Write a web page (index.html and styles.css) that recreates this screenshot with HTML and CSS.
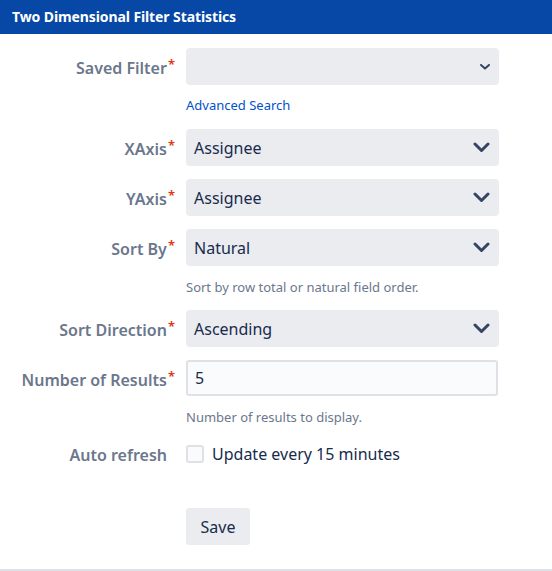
FILE: index.html
```html
<!DOCTYPE html>
<html>
<head>
<meta charset="utf-8">
<link rel="stylesheet" href="styles.css">
</head>
<body>
<div class="panel">
  <div class="header">Two Dimensional Filter Statistics</div>
  <form class="form">
    <div class="row">
      <label class="label">Saved Filter<span class="req">*</span></label>
      <div class="field">
        <div class="select">
          <span class="value"></span>
          <svg class="chev-small" width="10" height="6" viewBox="0 0 10 6"><path d="M1 1 L5 4.6 L9 1" fill="none" stroke="#344563" stroke-width="2" stroke-linecap="round" stroke-linejoin="round"/></svg>
        </div>
        <a class="link" href="#">Advanced Search</a>
      </div>
    </div>
    <div class="row">
      <label class="label">XAxis<span class="req">*</span></label>
      <div class="field">
        <div class="select">
          <span class="value">Assignee</span>
          <svg class="chev" width="17" height="11" viewBox="0 0 17 11"><path d="M2 2 L8.5 8.5 L15 2" fill="none" stroke="#344563" stroke-width="3" stroke-linecap="round" stroke-linejoin="round"/></svg>
        </div>
      </div>
    </div>
    <div class="row">
      <label class="label">YAxis<span class="req">*</span></label>
      <div class="field">
        <div class="select">
          <span class="value">Assignee</span>
          <svg class="chev" width="17" height="11" viewBox="0 0 17 11"><path d="M2 2 L8.5 8.5 L15 2" fill="none" stroke="#344563" stroke-width="3" stroke-linecap="round" stroke-linejoin="round"/></svg>
        </div>
      </div>
    </div>
    <div class="row">
      <label class="label">Sort By<span class="req">*</span></label>
      <div class="field">
        <div class="select">
          <span class="value">Natural</span>
          <svg class="chev" width="17" height="11" viewBox="0 0 17 11"><path d="M2 2 L8.5 8.5 L15 2" fill="none" stroke="#344563" stroke-width="3" stroke-linecap="round" stroke-linejoin="round"/></svg>
        </div>
        <div class="desc">Sort by row total or natural field order.</div>
      </div>
    </div>
    <div class="row">
      <label class="label">Sort Direction<span class="req">*</span></label>
      <div class="field">
        <div class="select">
          <span class="value">Ascending</span>
          <svg class="chev" width="17" height="11" viewBox="0 0 17 11"><path d="M2 2 L8.5 8.5 L15 2" fill="none" stroke="#344563" stroke-width="3" stroke-linecap="round" stroke-linejoin="round"/></svg>
        </div>
      </div>
    </div>
    <div class="row">
      <label class="label">Number of Results<span class="req">*</span></label>
      <div class="field">
        <div class="input">5</div>
        <div class="desc">Number of results to display.</div>
      </div>
    </div>
    <div class="row row-check">
      <label class="label">Auto refresh</label>
      <div class="field">
        <div class="check">
          <span class="box"></span>
          <span class="check-label">Update every 15 minutes</span>
        </div>
      </div>
    </div>
    <div class="row row-buttons">
      <div class="label"></div>
      <div class="field">
        <button type="button" class="btn">Save</button>
      </div>
    </div>
  </form>
</div>
</body>
</html>
```
FILE: styles.css
```css
html, body {
  margin: 0;
  padding: 0;
  background: #ffffff;
}
body {
  font-family: "Noto Sans", "Segoe UI", sans-serif;
  color: #172B4D;
}
.panel {
  width: 552px;
  height: 571px;
  box-sizing: border-box;
  border-bottom: 2px solid #DFE1E6;
  display: flex;
  flex-direction: column;
}
.header {
  height: 34px;
  background: #0747A6;
  color: #ffffff;
  font-weight: 700;
  font-size: 14px;
  line-height: 34px;
  padding-left: 12px;
  letter-spacing: -0.1px;
}
.form {
  display: flex;
  flex-direction: column;
  padding-top: 14px;
}
.row {
  display: grid;
  grid-template-columns: 174px 313px;
  column-gap: 12px;
  margin-bottom: 13px;
}
.label {
  text-align: right;
  font-size: 16px;
  font-weight: 600;
  color: #6B778C;
  line-height: 41px;
  height: 37px;
  white-space: nowrap;
  padding-right: 7px;
  box-sizing: border-box;
}
.req {
  color: #DE350B;
  font-size: 13px;
  line-height: 0;
  vertical-align: 5px;
  margin-left: 1px;
  margin-right: -8px;
}
.field {
  display: flex;
  flex-direction: column;
  align-items: flex-start;
}
.select {
  width: 313px;
  height: 37px;
  box-sizing: border-box;
  background: #EBECF0;
  border-radius: 4px;
  display: flex;
  align-items: center;
  justify-content: space-between;
  padding: 0 9px 0 8px;
}
.value {
  font-size: 16px;
  color: #172B4D;
}
.link {
  font-size: 13px;
  color: #0052CC;
  text-decoration: none;
  margin-top: 12px;
  line-height: 16px;
  margin-bottom: 3px;
}
.desc {
  font-size: 13px;
  color: #6B778C;
  margin-top: 13px;
  line-height: 16px;
  margin-bottom: 2px;
}
.input {
  width: 312px;
  height: 36px;
  box-sizing: border-box;
  background: #FAFBFC;
  border: 2px solid #DFE1E6;
  border-radius: 3px;
  font-size: 16px;
  line-height: 32px;
  padding-left: 7px;
  color: #172B4D;
}
.row-check {
  margin-top: 2px;
}
.row-check .label {
  height: 24px;
  line-height: 26px;
}
.check {
  display: flex;
  align-items: center;
  height: 24px;
}
.box {
  width: 14px;
  height: 14px;
  border: 2px solid #DFE1E6;
  background: #FAFBFC;
  border-radius: 3px;
  margin-right: 8px;
}
.check-label {
  font-size: 16px;
  color: #172B4D;
}
.row-buttons {
  margin-top: 29px;
}
.btn {
  height: 37px;
  width: 64px;
  border: none;
  background: #EBECF0;
  border-radius: 3px;
  font-family: "Noto Sans", sans-serif;
  font-size: 16px;
  color: #172B4D;
  padding: 0;
}
```
